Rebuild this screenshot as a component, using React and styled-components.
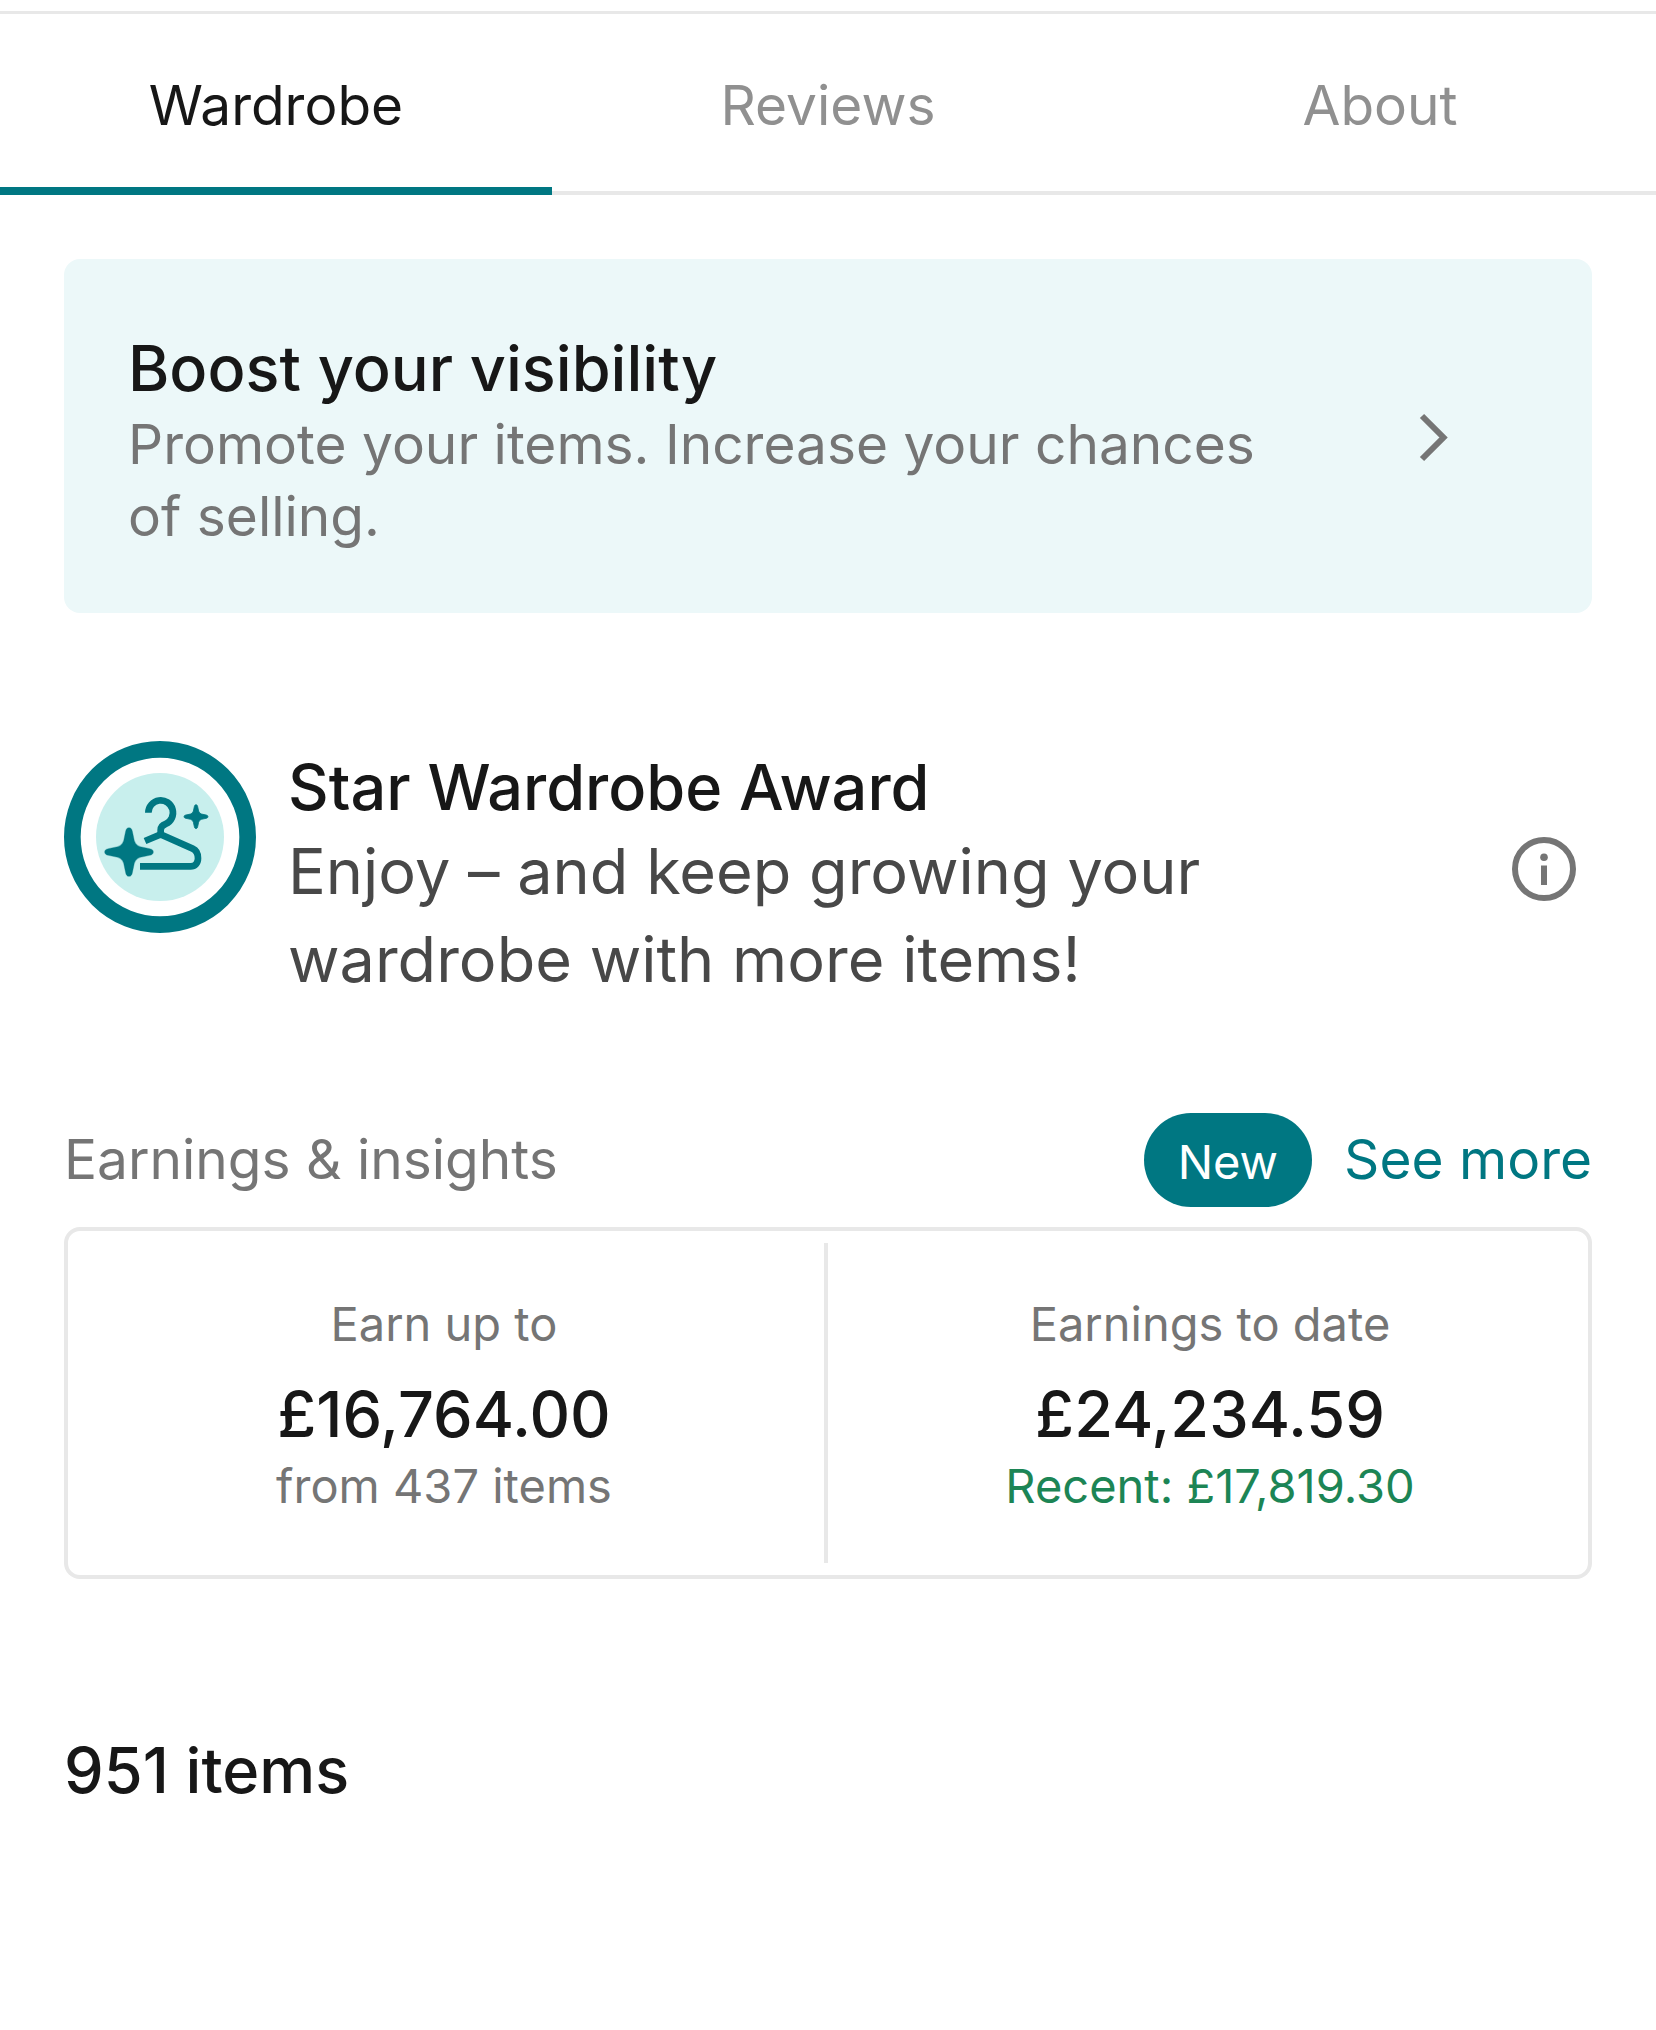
import React, { useState } from "react";
import styled, { createGlobalStyle } from "styled-components";

const colors = {
  primary: "#007782",
  primaryLight: "#c8efed",
  banner: "#ecf8f9",
  title: "#171717",
  body: "#484848",
  muted: "#757575",
  inactive: "#909090",
  border: "#e8e8e8",
  success: "#1c8555",
};

const GlobalStyle = createGlobalStyle`
  *,
  *::before,
  *::after {
    box-sizing: border-box;
  }

  body {
    margin: 0;
    background: #fff;
    font-family: Inter, "Liberation Sans", sans-serif;
    color: ${colors.title};
  }

  h2,
  p {
    margin: 0;
  }
`;

const Page = styled.div`
  padding-top: 11px;
`;

const Tabs = styled.nav`
  display: grid;
  grid-template-columns: repeat(3, 1fr);
  height: 184px;
  border-top: 3px solid ${colors.border};
`;

const Tab = styled.button`
  padding: 0;
  border: 0;
  background: none;
  font: inherit;
  font-size: 55px;
  line-height: 72px;
  cursor: pointer;
  color: ${({ $active }) => ($active ? colors.title : colors.inactive)};
  box-shadow: inset 0
    ${({ $active }) =>
      $active ? `-8px ${colors.primary}` : `-4px ${colors.border}`};
`;

const Content = styled.main`
  padding: 64px;
`;

const Title = styled.h2`
  font-size: 63px;
  font-weight: 500;
  line-height: 80px;
`;

const Banner = styled.a`
  display: flex;
  align-items: center;
  gap: 128px;
  padding: 69px 126px 61px 64px;
  border-radius: 16px;
  background: ${colors.banner};
  color: inherit;
  text-decoration: none;
`;

const BannerText = styled.div`
  flex: 1;
`;

const BannerNote = styled.p`
  font-size: 55px;
  line-height: 72px;
  color: ${colors.muted};
`;

const Icon = styled.svg`
  display: block;
  flex: none;
  width: 64px;
  height: 64px;
  color: ${colors.muted};
`;

const Award = styled.section`
  display: flex;
  align-items: flex-start;
  gap: 32px;
  margin-top: 128px;
`;

const Badge = styled.svg`
  flex: none;
  width: 192px;
  height: 192px;
`;

const AwardText = styled.div`
  flex: 1;
  padding-top: 6px;
`;

const AwardNote = styled.p`
  font-size: 63px;
  line-height: 88px;
  color: ${colors.body};
`;

const InfoButton = styled.button`
  padding: 96px 16px;
  border: 0;
  background: none;
  cursor: pointer;
`;

const InsightsHeader = styled.div`
  display: flex;
  align-items: baseline;
  gap: 32px;
  margin-top: 110px;
  font-size: 55px;
  line-height: 72px;
`;

const InsightsLabel = styled.span`
  flex: 1;
  color: ${colors.muted};
`;

const Pill = styled.span`
  padding: 18px 34px 14px;
  border-radius: 48px;
  background: ${colors.primary};
  color: #fff;
  font-size: 47px;
  line-height: 62px;
`;

const SeeMore = styled.a`
  color: ${colors.primary};
  text-decoration: none;
`;

const Card = styled.section`
  display: grid;
  grid-template-columns: 1fr 1fr;
  margin-top: 20px;
  padding: 16px 0;
  border-radius: 16px;
  box-shadow: inset 0 0 0 4px ${colors.border};
`;

const Stat = styled.div`
  padding: 49px 0 45px;
  text-align: center;

  &:first-child {
    border-right: 4px solid ${colors.border};
  }
`;

const StatText = styled.p`
  font-size: 47px;
  line-height: 64px;
  color: ${({ $positive }) => ($positive ? colors.success : colors.muted)};
`;

const Amount = styled.p`
  margin-top: 18px;
  font-size: 63px;
  font-weight: 500;
  line-height: 80px;
`;

const ItemCount = styled(Title)`
  margin-top: 151px;
`;

const ChevronIcon = () => (
  <Icon viewBox="0 0 64 64" fill="none" aria-hidden="true">
    <path d="M20 8 41.5 29.5 20 51" stroke="currentColor" strokeWidth="6" />
  </Icon>
);

const InfoIcon = () => (
  <Icon viewBox="0 0 64 64" aria-hidden="true">
    <circle cx="32" cy="32" r="29" fill="none" stroke="currentColor" strokeWidth="6" />
    <circle cx="32" cy="20.3" r="3.8" fill="currentColor" />
    <path d="M29 28.5h6v19.5h-6z" fill="currentColor" />
  </Icon>
);

// four-pointed sparkle, drawn around the origin
const SPARKLE =
  "M0-73C6-73 9-68 10-62L16-34Q20-20 34-16L62-10C68-9 73-6 73 0S68 9 62 10L34 16Q20 20 16 34L10 62C9 68 6 73 0 73S-9 68-10 62L-16 34Q-20 20-34 16L-62 10C-68 9-73 6-73 0S-68-9-62-10L-34-16Q-20-20-16-34L-10-62C-9-68-6-73 0-73Z";

const StarWardrobeBadge = () => (
  <Badge viewBox="0 0 576 576" role="img" aria-label="Star Wardrobe">
    <circle cx="288" cy="288" r="263" fill="#fff" stroke={colors.primary} strokeWidth="50" />
    <circle cx="288" cy="288" r="192" fill={colors.primaryLight} />
    <g fill="none" stroke={colors.primary} strokeWidth="20">
      <path d="M253 215a37 37 0 1 1 52 34Q290 254 290 267V282" />
      <path d="M243 300 290 280 386 323C400 329 402 340 402 352C402 367 393 376 380 376H228" />
    </g>
    <g fill={colors.primary} stroke={colors.primary}>
      <path transform="translate(195 333)" strokeWidth="1" d={SPARKLE} />
      <path transform="translate(396 227) scale(.49)" strokeWidth="5" d={SPARKLE} />
    </g>
  </Badge>
);

const TABS = ["Wardrobe", "Reviews", "About"];

const App = () => {
  const [activeTab, setActiveTab] = useState("Wardrobe");

  return (
    <Page>
      <GlobalStyle />
      <Tabs>
        {TABS.map((tab) => (
          <Tab
            key={tab}
            type="button"
            $active={tab === activeTab}
            onClick={() => setActiveTab(tab)}
          >
            {tab}
          </Tab>
        ))}
      </Tabs>
      <Content>
        <Banner href="#promote">
          <BannerText>
            <Title>Boost your visibility</Title>
            <BannerNote>
              Promote your items. Increase your chances of selling.
            </BannerNote>
          </BannerText>
          <ChevronIcon />
        </Banner>

        <Award>
          <StarWardrobeBadge />
          <AwardText>
            <Title>Star Wardrobe Award</Title>
            <AwardNote>
              Enjoy – and keep growing your wardrobe with more items!
            </AwardNote>
          </AwardText>
          <InfoButton type="button" aria-label="About this award">
            <InfoIcon />
          </InfoButton>
        </Award>

        <InsightsHeader>
          <InsightsLabel>Earnings &amp; insights</InsightsLabel>
          <Pill>New</Pill>
          <SeeMore href="#insights">See more</SeeMore>
        </InsightsHeader>
        <Card>
          <Stat>
            <StatText>Earn up to</StatText>
            <Amount>£16,764.00</Amount>
            <StatText>from 437 items</StatText>
          </Stat>
          <Stat>
            <StatText>Earnings to date</StatText>
            <Amount>£24,234.59</Amount>
            <StatText $positive>Recent: £17,819.30</StatText>
          </Stat>
        </Card>

        <ItemCount>951 items</ItemCount>
      </Content>
    </Page>
  );
};

export default App;
